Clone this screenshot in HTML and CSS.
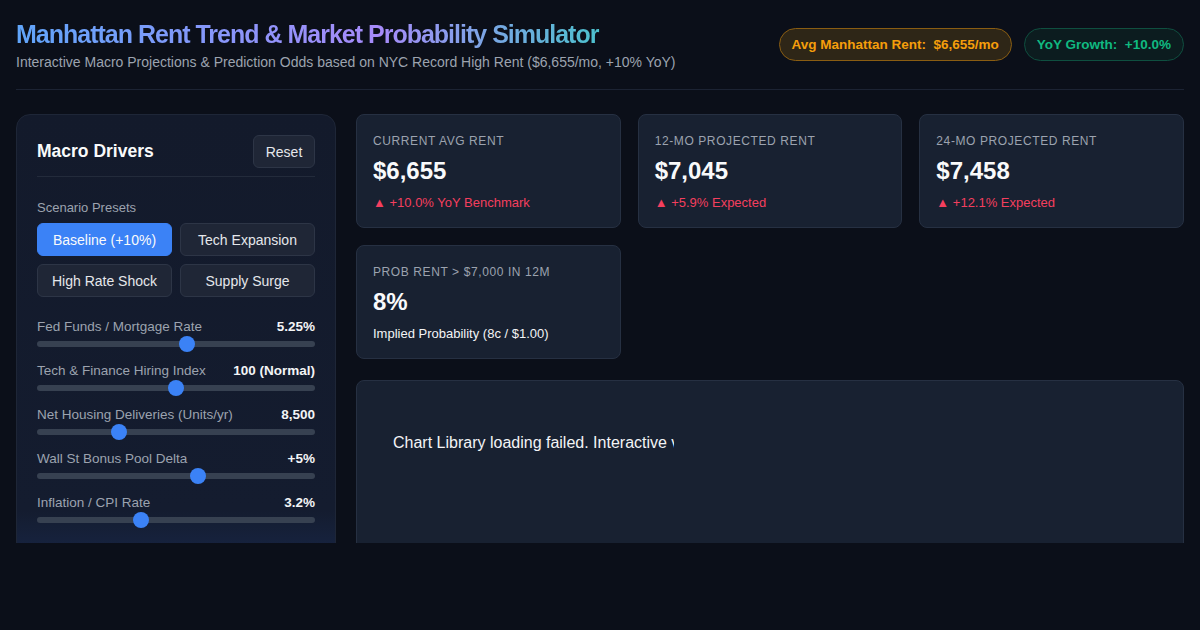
FILE: index.html
```html
<!DOCTYPE html>
<html>
<head>
<meta charset="utf-8">
<link rel="stylesheet" href="styles.css">
</head>
<body>
<div class="viewport">
  <div class="page">
    <header class="header">
      <div class="titles">
        <h1 class="title">Manhattan Rent Trend &amp; Market Probability Simulator</h1>
        <p class="subtitle">Interactive Macro Projections &amp; Prediction Odds based on NYC Record High Rent ($6,655/mo, +10% YoY)</p>
      </div>
      <div class="badges">
        <span class="badge badge-amber">Avg Manhattan Rent:&nbsp; $6,655/mo</span>
        <span class="badge badge-green">YoY Growth:&nbsp; +10.0%</span>
      </div>
    </header>

    <main class="main">
      <aside class="panel">
        <div class="panel-head">
          <h2 class="panel-title">Macro Drivers</h2>
          <button class="btn btn-reset">Reset</button>
        </div>
        <div class="section-label">Scenario Presets</div>
        <div class="presets">
          <button class="btn preset active">Baseline (+10%)</button>
          <button class="btn preset">Tech Expansion</button>
          <button class="btn preset">High Rate Shock</button>
          <button class="btn preset">Supply Surge</button>
        </div>
        <div class="sliders">
          <div class="slider">
            <div class="slider-row"><span class="slider-label">Fed Funds / Mortgage Rate</span><span class="slider-value">5.25%</span></div>
            <div class="track"><span class="thumb" style="left:54%"></span></div>
          </div>
          <div class="slider">
            <div class="slider-row"><span class="slider-label">Tech &amp; Finance Hiring Index</span><span class="slider-value">100 (Normal)</span></div>
            <div class="track"><span class="thumb" style="left:50%"></span></div>
          </div>
          <div class="slider">
            <div class="slider-row"><span class="slider-label">Net Housing Deliveries (Units/yr)</span><span class="slider-value">8,500</span></div>
            <div class="track"><span class="thumb" style="left:29.5%"></span></div>
          </div>
          <div class="slider">
            <div class="slider-row"><span class="slider-label">Wall St Bonus Pool Delta</span><span class="slider-value">+5%</span></div>
            <div class="track"><span class="thumb" style="left:58%"></span></div>
          </div>
          <div class="slider">
            <div class="slider-row"><span class="slider-label">Inflation / CPI Rate</span><span class="slider-value">3.2%</span></div>
            <div class="track"><span class="thumb" style="left:37.5%"></span></div>
          </div>
        </div>
      </aside>

      <section class="content">
        <div class="cards">
          <div class="card">
            <div class="card-label">Current Avg Rent</div>
            <div class="card-value">$6,655</div>
            <div class="card-change up">▲ +10.0% YoY Benchmark</div>
          </div>
          <div class="card">
            <div class="card-label">12-Mo Projected Rent</div>
            <div class="card-value">$7,045</div>
            <div class="card-change up">▲ +5.9% Expected</div>
          </div>
          <div class="card">
            <div class="card-label">24-Mo Projected Rent</div>
            <div class="card-value">$7,458</div>
            <div class="card-change up">▲ +12.1% Expected</div>
          </div>
          <div class="card">
            <div class="card-label">Prob Rent &gt; $7,000 in 12M</div>
            <div class="card-value">8%</div>
            <div class="card-note">Implied Probability (8c / $1.00)</div>
          </div>
        </div>
        <div class="chart">
          <div class="chart-msg">Chart Library loading failed. Interactive visualization unavailable.</div>
        </div>
      </section>
    </main>
  </div>
</div>
</body>
</html>
```

FILE: styles.css
```css
* { box-sizing: border-box; }
html, body {
  margin: 0;
  padding: 0;
  background: #0b0f19;
  font-family: "Liberation Sans", Arial, sans-serif;
  color: #f3f4f6;
}
.viewport {
  height: 543px;
  overflow: hidden;
}
.page {
  padding: 16px 16px 0;
}
.header {
  display: flex;
  justify-content: space-between;
  align-items: flex-start;
  padding-bottom: 17px;
  border-bottom: 1px solid #1c2333;
}
.title {
  margin: 2px 0 0;
  font-size: 25px;
  font-weight: 700;
  letter-spacing: -1px;
  line-height: 32px;
  background: linear-gradient(90deg, #60a5fa 0%, #a78bfa 55%, #2dd4bf 100%);
  -webkit-background-clip: text;
  background-clip: text;
  color: transparent;
}
.subtitle {
  margin: 2px 0 0;
  font-size: 14px;
  line-height: 20px;
  color: #9ca3af;
}
.badges {
  display: flex;
  gap: 12px;
  margin-top: 12px;
}
.badge {
  display: inline-flex;
  align-items: center;
  height: 33px;
  padding: 0 12px;
  border-radius: 17px;
  font-size: 13.5px;
  font-weight: 700;
  white-space: nowrap;
}
.badge-amber {
  color: #f59e0b;
  background: #2e2617;
  border: 1px solid #8a5d12;
}
.badge-green {
  color: #10b981;
  background: #0c1c1f;
  border: 1px solid #0f4f40;
}
.main {
  display: flex;
  gap: 20px;
  margin-top: 24px;
  align-items: flex-start;
}
.panel {
  flex: 0 0 320px;
  border: 1px solid #1e2637;
  border-radius: 14px;
  background: linear-gradient(180deg, #131a2b 0px, #141c2f 395px, #172442 440px);
  padding: 20px 20px 40px;
  height: 480px;
}
.panel-head {
  display: flex;
  justify-content: space-between;
  align-items: center;
  padding-bottom: 8px;
  border-bottom: 1px solid #232b3b;
}
.panel-title {
  margin: 0;
  font-size: 17.5px;
  font-weight: 700;
  color: #f9fafb;
}
.btn {
  font-family: "Liberation Sans", Arial, sans-serif;
  font-size: 14px;
  color: #e5e7eb;
  background: #1f2636;
  border: 1px solid #2d3546;
  border-radius: 6px;
  height: 33px;
  cursor: pointer;
}
.btn-reset {
  width: 62px;
  padding: 0;
}
.section-label {
  margin-top: 23px;
  font-size: 13px;
  color: #9ca3af;
}
.presets {
  margin-top: 8px;
  display: grid;
  grid-template-columns: 1fr 1fr;
  gap: 8px;
}
.preset.active {
  background: #3b82f6;
  border-color: #3b82f6;
  color: #f9fafb;
}
.sliders {
  margin-top: 22px;
  display: flex;
  flex-direction: column;
  gap: 16px;
}
.slider-row {
  display: flex;
  justify-content: space-between;
  font-size: 13.5px;
  line-height: 16px;
}
.slider-label { color: #9ca3af; }
.slider-value { color: #f3f4f6; font-weight: 700; }
.track {
  position: relative;
  margin-top: 6px;
  height: 6px;
  border-radius: 3px;
  background: #374151;
}
.thumb {
  position: absolute;
  top: 50%;
  width: 16px;
  height: 16px;
  margin: -8px 0 0 -8px;
  border-radius: 50%;
  background: #3b82f6;
}
.content {
  flex: 1;
  display: flex;
  flex-direction: column;
  gap: 21px;
}
.cards {
  display: grid;
  grid-template-columns: repeat(3, 1fr);
  gap: 17px;
}
.card {
  background: #182131;
  border: 1px solid #263042;
  border-radius: 8px;
  padding: 18px 16px 16px;
  height: 114px;
}
.card-label {
  font-size: 12px;
  letter-spacing: 0.6px;
  text-transform: uppercase;
  color: #9ca3af;
  line-height: 16px;
}
.card-value {
  margin-top: 7px;
  font-size: 24px;
  font-weight: 700;
  color: #f9fafb;
  line-height: 30px;
}
.card-change {
  margin-top: 9px;
  font-size: 13px;
  line-height: 16px;
}
.card-change.up { color: #f43f5e; }
.card-note {
  margin-top: 9px;
  font-size: 13px;
  line-height: 16px;
  color: #f3f4f6;
}
.chart {
  background: #182131;
  border: 1px solid #263042;
  border-radius: 8px;
  height: 300px;
  padding: 53px 36px;
}
.chart-msg {
  width: 281px;
  overflow: hidden;
  white-space: nowrap;
  font-size: 16px;
  color: #f3f4f6;
}
```
